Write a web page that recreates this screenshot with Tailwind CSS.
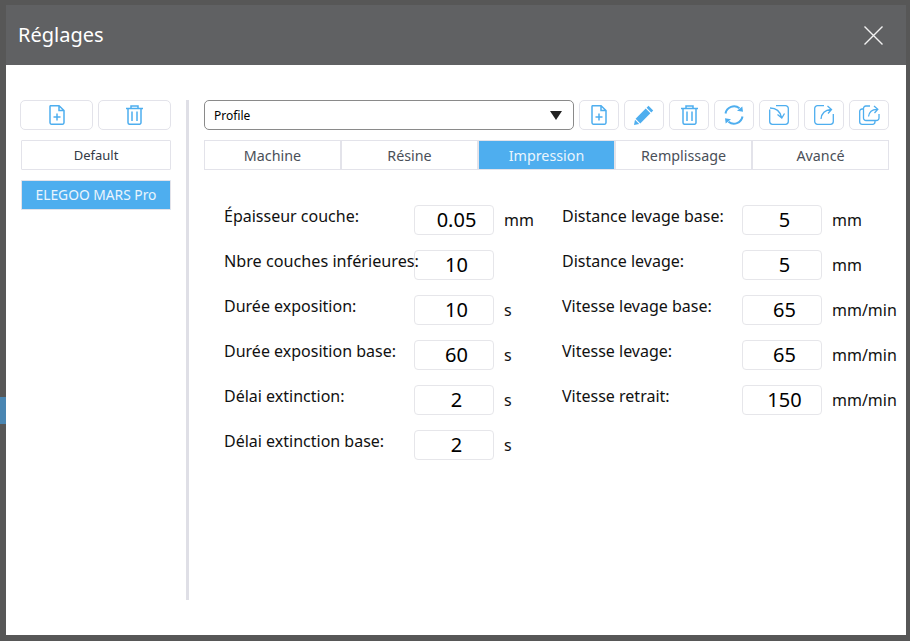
<!DOCTYPE html>
<html lang="fr">
<head>
    <meta charset="UTF-8">
    <title>Réglages</title>
    <script src="https://cdn.jsdelivr.net/npm/@tailwindcss/browser@4"></script>
</head>
<body class="relative w-[910px] h-[641px] overflow-hidden bg-[#575757] font-['Noto_Sans','Open_Sans',sans-serif]">
    <!-- sliver of the scene behind the dialog -->
    <div class="absolute left-0 top-[397px] w-[6px] h-[27px] bg-[#4a86b2]"></div>

    <div class="absolute left-[6px] top-[5px] w-[900px] h-[630px] bg-white flex flex-col">
        <div class="h-[60px] shrink-0 bg-[#606163] flex items-center justify-between pl-[12px] pr-[23px]">
            <span class="text-white text-[20px] leading-none">Réglages</span>
            <svg width="19" height="19" viewBox="0 0 19 19" fill="none" stroke="#f2f2f2" stroke-width="1.4"><path d="M0.500 0.500L18.500 18.500M18.500 0.500L0.500 18.500"/></svg>
        </div>

        <div class="flex flex-1 pt-[35px] pb-[35px] pl-[14px]">
            <!-- profile list -->
            <div class="w-[151px] shrink-0 flex flex-col">
                <div class="flex gap-[5px]">
                    <button class="w-[73px] h-[30px] border border-[#e3e3ea] rounded-[5px] flex items-center justify-center">
                        <svg width="16" height="20" viewBox="0 0 16 20" fill="none" stroke="#4eaeef" stroke-width="1.5"><path d="M1.500 0.700H10L15 5.500V17.500a1.600 1.600 0 0 1-1.600 1.700H2.600a1.600 1.600 0 0 1-1.600-1.700V2a1.300 1.300 0 0 1 .5-1.300zM10 1V5.500H15M8 8.500V15.500M4.500 12H11.500"/></svg>
                    </button>
                    <button class="w-[73px] h-[30px] border border-[#e3e3ea] rounded-[5px] flex items-center justify-center">
                        <svg width="19" height="20" viewBox="0 0 18 20" fill="none" stroke="#4eaeef" stroke-width="1.5"><path d="M0.500 3.500H17.500M5.500 3.500V1H12.500V3.500M2.500 3.500V17.500a1.800 1.800 0 0 0 1.800 1.800H13.700a1.800 1.800 0 0 0 1.800-1.800V3.500M6.500 6.500V16M11.500 6.500V16"/></svg>
                    </button>
                </div>
                <div class="ml-[1px] mt-[10px] w-[150px] h-[30px] pt-[1px] border border-[#e3e3ea] rounded-[1px] flex items-center justify-center text-[13px] text-[#333a45]">Default</div>
                <div class="ml-[1px] mt-[10px] w-[150px] h-[30px] pt-[1px] bg-[#4eaeef] border border-[#e3e3ea] rounded-[1px] flex items-center justify-center text-[13.800px] text-[#eaf5fd]">ELEGOO MARS Pro</div>
            </div>

            <div class="ml-[15px] w-[3px] h-[500px] bg-[#dfdfe6] shrink-0"></div>

            <div class="ml-[15px] w-[685px] shrink-0">
                <!-- profile toolbar -->
                <div class="flex gap-[5px]">
                    <div class="w-[370px] h-[30px] pt-[1px] border border-[#8a8a8a] rounded-[5px] flex items-center justify-between pl-[9px] pr-[11px] text-[12px] text-black">
                        <span>Profile</span>
                        <span class="w-0 h-0 border-x-[6px] border-x-transparent border-t-[9px] border-t-[#222]"></span>
                    </div>
                    <button class="w-[40px] h-[30px] border border-[#e3e3ea] rounded-[5px] flex items-center justify-center">
                        <svg width="16" height="20" viewBox="0 0 16 20" fill="none" stroke="#4eaeef" stroke-width="1.5"><path d="M1.500 0.700H10L15 5.500V17.500a1.600 1.600 0 0 1-1.600 1.700H2.600a1.600 1.600 0 0 1-1.600-1.700V2a1.300 1.300 0 0 1 .5-1.300zM10 1V5.500H15M8 8.500V15.500M4.500 12H11.500"/></svg>
                    </button>
                    <button class="w-[40px] h-[30px] border border-[#e3e3ea] rounded-[5px] flex items-center justify-center">
                        <svg width="20" height="20" viewBox="0 0 20 20" fill="#4eaeef"><path d="M14.500 0.800L19.200 5.500L17.300 7.400L12.600 2.700zM11.700 3.600L16.400 8.300L6.300 18.400L1.600 13.700zM1 14.800L5.200 19L0 20z"/></svg>
                    </button>
                    <button class="w-[40px] h-[30px] border border-[#e3e3ea] rounded-[5px] flex items-center justify-center">
                        <svg width="19" height="20" viewBox="0 0 18 20" fill="none" stroke="#4eaeef" stroke-width="1.5"><path d="M0.500 3.500H17.500M5.500 3.500V1H12.500V3.500M2.500 3.500V17.500a1.800 1.800 0 0 0 1.800 1.800H13.700a1.800 1.800 0 0 0 1.800-1.800V3.500M6.500 6.500V16M11.500 6.500V16"/></svg>
                    </button>
                    <button class="w-[40px] h-[30px] border border-[#e3e3ea] rounded-[5px] flex items-center justify-center">
                        <svg width="20" height="20" viewBox="0 0 20 20" fill="none" stroke="#4eaeef" stroke-width="2"><path d="M1.500 8.500A8.700 8.700 0 0 1 15.500 3.300M18.500 11.500A8.700 8.700 0 0 1 4.500 16.700"/><path fill="#4eaeef" stroke="none" d="M13 5.800L19 6.800L18.300 1.500zM7 14.200L1 13.200L1.700 18.500z"/></svg>
                    </button>
                    <button class="w-[40px] h-[30px] border border-[#e3e3ea] rounded-[5px] flex items-center justify-center">
                        <svg width="20" height="20" viewBox="0 0 20 20" fill="none" stroke="#4eaeef" stroke-width="1.300"><path d="M0.700 4.500V16.500a2.800 2.800 0 0 0 2.800 2.800H16.500a2.800 2.800 0 0 0 2.800-2.800V3.500a2.800 2.800 0 0 0-2.800-2.800H7M1 3C6 3 11 5.500 12.500 12.500M8.500 9.500L12.800 13L15.500 8.500"/></svg>
                    </button>
                    <button class="w-[40px] h-[30px] border border-[#e3e3ea] rounded-[5px] flex items-center justify-center">
                        <svg width="20" height="20" viewBox="0 0 20 20" fill="none" stroke="#4eaeef" stroke-width="1.300"><path d="M10 0.700H3.500a2.800 2.800 0 0 0-2.800 2.800V16.500a2.800 2.800 0 0 0 2.800 2.800H16.500a2.800 2.800 0 0 0 2.800-2.800V9M7 14C7.500 9 10.500 5 17 4.500M13.500 1L17.500 4.500L14 8.500"/></svg>
                    </button>
                    <button class="w-[40px] h-[30px] border border-[#e3e3ea] rounded-[5px] flex items-center justify-center">
                        <svg width="21" height="20" viewBox="0 0 21 20" fill="none" stroke="#4eaeef" stroke-width="1.300"><path d="M4.500 4H3a2.300 2.300 0 0 0-2.300 2.300V16.800A2.500 2.500 0 0 0 3.200 19.300H13.500a2.500 2.500 0 0 0 2.500-2.500V15.500M11 1H6.800a2.300 2.300 0 0 0-2.300 2.300V13a2.500 2.500 0 0 0 2.500 2.500H17.500a2.500 2.500 0 0 0 2.500-2.500V9M9.500 11.500C10 7.500 13 4.500 18 4.300M15 1L18.800 4.300L15.500 8"/></svg>
                    </button>
                </div>

                <!-- tabs -->
                <div class="mt-[10px] grid grid-cols-[137px_137px_137px_137px_1fr] h-[30px] border border-[#e3e3ea] text-[14.300px] text-[#4a4f58]">
                    <div class="pt-[1px] border-r-2 border-[#e3e3ea] flex items-center justify-center">Machine</div>
                    <div class="pt-[1px] border-r-2 border-[#e3e3ea] flex items-center justify-center">Résine</div>
                    <div class="pt-[1px] bg-[#4eaeef] border-r-2 border-[#e3e3ea] flex items-center justify-center text-[#eaf5fd]">Impression</div>
                    <div class="pt-[1px] border-r-2 border-[#e3e3ea] flex items-center justify-center">Remplissage</div>
                    <div class="pt-[1px] flex items-center justify-center">Avancé</div>
                </div>

                <!-- settings form -->
                <div class="mt-[35px] ml-[21px] flex">
                    <div class="w-[337px] shrink-0 flex flex-col gap-[15px]">
                        <div class="flex h-[30px]"><span class="w-[189px] -ml-[1px] mr-[1px] text-[16px] leading-[22px] whitespace-nowrap text-[#111]">Épaisseur couche:</span><div class="w-[80px] pb-[1px] pl-[5px] border border-[#e6e6ea] rounded-[4px] flex items-center justify-center text-[20px] text-black">0.05</div><span class="ml-[10px] text-[16px] leading-[31px] text-[#111]">mm</span></div>
                        <div class="flex h-[30px]"><span class="w-[189px] -ml-[1px] mr-[1px] text-[16.200px] leading-[22px] whitespace-nowrap text-[#111]">Nbre couches inférieures:</span><div class="w-[80px] pb-[1px] pl-[5px] border border-[#e6e6ea] rounded-[4px] flex items-center justify-center text-[20px] text-black">10</div></div>
                        <div class="flex h-[30px]"><span class="w-[189px] -ml-[1px] mr-[1px] text-[16px] leading-[22px] whitespace-nowrap text-[#111]">Durée exposition:</span><div class="w-[80px] pb-[1px] pl-[5px] border border-[#e6e6ea] rounded-[4px] flex items-center justify-center text-[20px] text-black">10</div><span class="ml-[10px] text-[16px] leading-[31px] text-[#111]">s</span></div>
                        <div class="flex h-[30px]"><span class="w-[189px] -ml-[1px] mr-[1px] text-[16px] leading-[22px] whitespace-nowrap text-[#111]">Durée exposition base:</span><div class="w-[80px] pb-[1px] pl-[5px] border border-[#e6e6ea] rounded-[4px] flex items-center justify-center text-[20px] text-black">60</div><span class="ml-[10px] text-[16px] leading-[31px] text-[#111]">s</span></div>
                        <div class="flex h-[30px]"><span class="w-[189px] -ml-[1px] mr-[1px] text-[16px] leading-[22px] whitespace-nowrap text-[#111]">Délai extinction:</span><div class="w-[80px] pb-[1px] pl-[5px] border border-[#e6e6ea] rounded-[4px] flex items-center justify-center text-[20px] text-black">2</div><span class="ml-[10px] text-[16px] leading-[31px] text-[#111]">s</span></div>
                        <div class="flex h-[30px]"><span class="w-[189px] -ml-[1px] mr-[1px] text-[16px] leading-[22px] whitespace-nowrap text-[#111]">Délai extinction base:</span><div class="w-[80px] pb-[1px] pl-[5px] border border-[#e6e6ea] rounded-[4px] flex items-center justify-center text-[20px] text-black">2</div><span class="ml-[10px] text-[16px] leading-[31px] text-[#111]">s</span></div>
                    </div>
                    <div class="flex flex-col gap-[15px]">
                        <div class="flex h-[30px]"><span class="w-[180px] text-[16px] leading-[22px] whitespace-nowrap text-[#111]">Distance levage base:</span><div class="w-[80px] pb-[1px] pl-[5px] border border-[#e6e6ea] rounded-[4px] flex items-center justify-center text-[20px] text-black">5</div><span class="ml-[10px] text-[16px] leading-[31px] text-[#111]">mm</span></div>
                        <div class="flex h-[30px]"><span class="w-[180px] text-[16px] leading-[22px] whitespace-nowrap text-[#111]">Distance levage:</span><div class="w-[80px] pb-[1px] pl-[5px] border border-[#e6e6ea] rounded-[4px] flex items-center justify-center text-[20px] text-black">5</div><span class="ml-[10px] text-[16px] leading-[31px] text-[#111]">mm</span></div>
                        <div class="flex h-[30px]"><span class="w-[180px] text-[16px] leading-[22px] whitespace-nowrap text-[#111]">Vitesse levage base:</span><div class="w-[80px] pb-[1px] pl-[5px] border border-[#e6e6ea] rounded-[4px] flex items-center justify-center text-[20px] text-black">65</div><span class="ml-[10px] text-[16px] leading-[31px] whitespace-nowrap text-[#111]">mm/min</span></div>
                        <div class="flex h-[30px]"><span class="w-[180px] text-[16px] leading-[22px] whitespace-nowrap text-[#111]">Vitesse levage:</span><div class="w-[80px] pb-[1px] pl-[5px] border border-[#e6e6ea] rounded-[4px] flex items-center justify-center text-[20px] text-black">65</div><span class="ml-[10px] text-[16px] leading-[31px] whitespace-nowrap text-[#111]">mm/min</span></div>
                        <div class="flex h-[30px]"><span class="w-[180px] text-[16px] leading-[22px] whitespace-nowrap text-[#111]">Vitesse retrait:</span><div class="w-[80px] pb-[1px] pl-[5px] border border-[#e6e6ea] rounded-[4px] flex items-center justify-center text-[20px] text-black">150</div><span class="ml-[10px] text-[16px] leading-[31px] whitespace-nowrap text-[#111]">mm/min</span></div>
                    </div>
                </div>
            </div>
        </div>
    </div>
</body>
</html>
